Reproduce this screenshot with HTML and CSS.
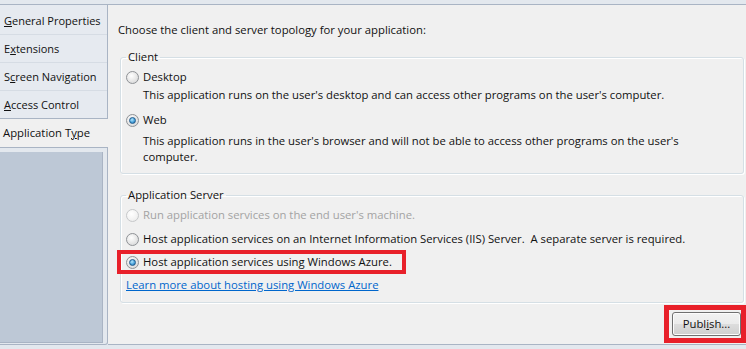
FILE: index.html
```html
<!DOCTYPE html>
<html>
<head>
<meta charset="utf-8">
<link rel="stylesheet" href="styles.css">
</head>
<body>
<div class="app">
  <div class="sidebar">
    <div class="tabs">
      <div class="tab"><u>G</u>eneral Properties</div>
      <div class="tab">E<u>x</u>tensions</div>
      <div class="tab">S<u>c</u>reen Navigation</div>
      <div class="tab last"><u>A</u>ccess Control</div>
    </div>
    <div class="tab-selected">Application T<u>y</u>pe</div>
    <div class="sidebar-lower"><div class="lower-inner"></div></div>
  </div>
  <div class="content">
    <div class="intro">Choose the client and server topology for your application:</div>
    <fieldset class="group client">
      <legend>Client</legend>
      <div class="option"><span class="radio"></span><span>Desktop</span></div>
      <div class="desc first">This application runs on the user's desktop and can access other programs on the user's computer.</div>
      <div class="option web"><span class="radio checked"></span><span>Web</span></div>
      <div class="desc second">This application runs in the user's browser and will not be able to access other programs on the user's computer.</div>
    </fieldset>
    <fieldset class="group server">
      <legend>Application Server</legend>
      <div class="option disabled"><span class="radio"></span><span>Run application services on the end user's machine.</span></div>
      <div class="option row2"><span class="radio"></span><span>Host application services on an Internet Information Services (IIS) Server.&nbsp; A separate server is required.</span></div>
      <div class="highlight"><div class="option"><span class="radio checked"></span><span>Host application services using Windows Azure.</span></div></div>
      <div class="link-row"><a class="link" href="#">Learn more about hosting using Windows Azure</a></div>
    </fieldset>
    <div class="footer">
      <div class="btn-highlight"><button class="btn">Publ<u>i</u>sh...</button></div>
    </div>
  </div>
</div>
</body>
</html>
```

FILE: styles.css
```css
html, body {
  margin: 0;
  padding: 0;
}
body {
  width: 746px;
  height: 349px;
  overflow: hidden;
  background: #e3e8ee;
  font-family: "Open Sans", "Noto Sans", sans-serif;
  font-size: 11.3px;
  color: #111;
}
.app {
  display: flex;
  height: 345px;
  padding-top: 4px;
  box-sizing: border-box;
  background: #e3e8ee;
}
.sidebar {
  width: 108px;
  flex: none;
  display: flex;
  flex-direction: column;
}
.tabs {
  background: #e6eaf0;
  border-top: 1px solid #a9b4c4;
  border-right: 1px solid #a9b4c4;
  border-bottom: 1px solid #a9b4c4;
  padding-top: 2px;
}
.tab {
  height: 27px;
  line-height: 28px;
  padding-left: 4px;
  border-bottom: 1px solid #d6dce4;
  white-space: nowrap;
  font-size: 11px;
}
.tab.last {
  border-bottom: none;
}
.tab-selected {
  height: 28px;
  line-height: 28px;
  padding-left: 3px;
  background: #f0f0f0;
  white-space: nowrap;
}
.sidebar-lower {
  flex: 1;
  background: #e3e8ee;
  border-top: 1px solid #a9b4c4;
  border-right: 1px solid #a9b4c4;
  border-bottom: 1px solid #a9b4c4;
  border-bottom-right-radius: 3px;
  padding: 4px 4px 1px 0;
}
.lower-inner {
  height: 100%;
  box-sizing: border-box;
  background: #bdc8d6;
  border-right: 1px solid #a9b4c4;
  border-bottom: 1px solid #a9b4c4;
}
.content {
  flex: 1;
  min-width: 0;
  display: flex;
  flex-direction: column;
  background: #f0f0f0;
  border-top: 1px solid #a9b4c4;
  border-bottom: 1px solid #a9b4c4;
  padding: 17px 2px 0 10px;
  line-height: 16px;
}
.intro {
  height: 16px;
  margin-bottom: 11px;
}
.group {
  margin: 0 0 0 2px;
  padding: 4px 6px 8px 5px;
  border: 1px solid #d5dfe5;
  border-radius: 3px;
  box-shadow: inset 1px 1px 0 #fff, 1px 1px 0 #fff;
  min-width: 0;
}
.group legend {
  padding: 0 2px;
  line-height: 16px;
}
.group.server {
  margin-top: 13px;
  padding-bottom: 9px;
}
.option {
  display: flex;
  align-items: center;
  gap: 4px;
  height: 16px;
  white-space: nowrap;
}
.option.web {
  margin-top: 9px;
}
.option.row2 {
  margin-top: 8px;
}
.option.disabled {
  color: #a3a3a3;
}
.desc {
  padding-left: 17px;
  max-width: 560px;
}
.desc.first {
  margin-top: 2px;
  max-width: none;
}
.desc.second {
  margin-top: 5px;
}
.radio {
  width: 13px;
  height: 13px;
  box-sizing: border-box;
  border-radius: 50%;
  border: 1px solid #8f9296;
  background: radial-gradient(circle at 40% 35%, #ffffff 0, #e6e6e6 55%, #cfd1d3 100%);
  display: flex;
  align-items: center;
  justify-content: center;
  flex: none;
}
.disabled .radio {
  border-color: #c6c8ca;
  background: radial-gradient(circle at 40% 35%, #ffffff 0, #f2f2f2 60%, #e6e6e6 100%);
}
.radio.checked::after {
  content: "";
  width: 7px;
  height: 7px;
  box-sizing: border-box;
  border-radius: 50%;
  border: 1px solid #1f5a8c;
  background: radial-gradient(circle at 40% 35%, #b4e6fc 0, #4aa3dc 55%, #1d66a6 100%);
}
.highlight {
  width: 289px;
  height: 24px;
  box-sizing: border-box;
  margin: 3px 0 -4px -9px;
  padding: 0 0 0 5px;
  border: 4px solid #e8202a;
  display: flex;
  align-items: center;
}
.link-row {
  margin-top: 7px;
  height: 16px;
}
.link {
  color: #0066cc;
  text-decoration: underline;
}
.footer {
  display: flex;
  justify-content: flex-end;
  margin-top: 2px;
  margin-right: -2px;
}
.btn-highlight {
  width: 82px;
  height: 38px;
  box-sizing: border-box;
  border: 5px solid #e8202a;
  padding: 2px 0 2px 3px;
}
.btn {
  width: 69px;
  height: 24px;
  margin: 0;
  padding: 0;
  border: 1px solid #707070;
  border-radius: 3px;
  background: linear-gradient(to bottom, #f2f2f2 0, #ebebeb 50%, #dddddd 51%, #cfcfcf 100%);
  box-shadow: inset 0 0 0 1px #fcfcfc;
  font-family: "Open Sans", "Noto Sans", sans-serif;
  font-size: 11.3px;
  color: #111;
  line-height: 20px;
}
```
